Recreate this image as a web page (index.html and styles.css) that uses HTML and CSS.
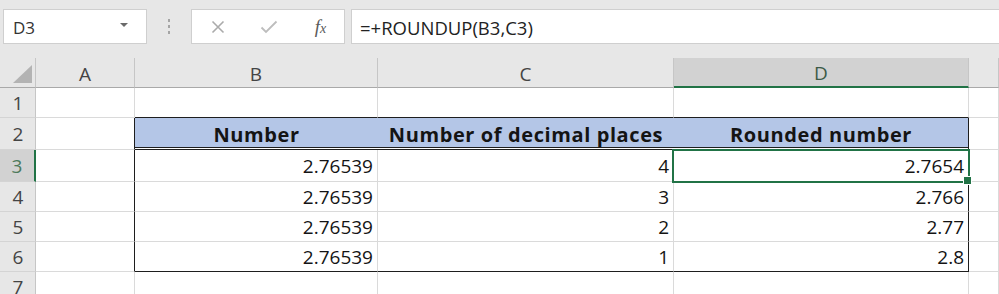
FILE: index.html
```html
<!DOCTYPE html>
<html>
<head>
<meta charset="utf-8">
<link rel="stylesheet" href="styles.css">
</head>
<body>
<div class="app">
  <div class="fbar">
    <div class="namebox">
      <span class="nb-text">D3</span>
      <svg class="nb-arrow" width="10" height="6" viewBox="0 0 10 6"><path d="M1 1 L9 1 L5 5 Z" fill="#6a6a6a"/></svg>
    </div>
    <div class="sep"><i></i><i></i><i></i></div>
    <div class="btns">
      <span class="btn"><svg width="16" height="14" viewBox="0 0 16 14"><path d="M2.5 1.5 L13.5 12.5 M13.5 1.5 L2.5 12.5" stroke="#ababab" stroke-width="1.6" fill="none"/></svg></span>
      <span class="btn"><svg width="18" height="14" viewBox="0 0 18 14"><path d="M1.5 7.5 L6 12 L16.5 1.5" stroke="#bdbdbd" stroke-width="1.8" fill="none"/></svg></span>
      <span class="btn fx"><span class="fx-f">f</span><span class="fx-x">x</span></span>
    </div>
    <div class="formula">=+ROUNDUP(B3,C3)</div>
  </div>
  <div class="sheet">
    <div class="corner"><svg width="36" height="30" viewBox="0 0 36 30"><path d="M32 7 L32 25 L13 25 Z" fill="#b3b3b3"/></svg></div>
    <div class="ch">A</div>
    <div class="ch">B</div>
    <div class="ch">C</div>
    <div class="ch sel">D</div>
    <div class="ch"></div>

    <div class="rh">1</div>
    <div class="c"></div>
    <div class="c tt"></div>
    <div class="c tt"></div>
    <div class="c tt"></div>
    <div class="c"></div>

    <div class="rh">2</div>
    <div class="c tl"></div>
    <div class="c th nr">Number</div>
    <div class="c th nr">Number of decimal places</div>
    <div class="c th tr">Rounded number</div>
    <div class="c"></div>

    <div class="rh sel">3</div>
    <div class="c tl"></div>
    <div class="c num">2.76539</div>
    <div class="c num">4</div>
    <div class="c num tr active">2.7654</div>
    <div class="c"></div>

    <div class="rh">4</div>
    <div class="c tl"></div>
    <div class="c num">2.76539</div>
    <div class="c num">3</div>
    <div class="c num tr">2.766</div>
    <div class="c"></div>

    <div class="rh">5</div>
    <div class="c tl"></div>
    <div class="c num">2.76539</div>
    <div class="c num">2</div>
    <div class="c num tr">2.77</div>
    <div class="c"></div>

    <div class="rh">6</div>
    <div class="c tl"></div>
    <div class="c num tb">2.76539</div>
    <div class="c num tb">1</div>
    <div class="c num tr tb">2.8</div>
    <div class="c"></div>

    <div class="rh">7</div>
    <div class="c"></div>
    <div class="c"></div>
    <div class="c"></div>
    <div class="c"></div>
    <div class="c"></div>
  </div>
</div>
</body>
</html>
```

FILE: styles.css
```css
* { box-sizing: border-box; }
html, body { margin: 0; padding: 0; }
body {
  width: 999px;
  height: 294px;
  overflow: hidden;
  background: #ffffff;
  font-family: "Open Sans", "Noto Sans", sans-serif;
}
.app { width: 999px; }

/* formula bar */
.fbar {
  height: 58px;
  background: #e7e7e7;
  display: flex;
  align-items: flex-start;
  padding: 9px 0 0 3px;
}
.namebox {
  width: 144px;
  height: 35px;
  background: #fff;
  border: 1px solid #cfcfcf;
  display: flex;
  align-items: center;
  justify-content: space-between;
  padding: 0 17px 0 9px;
}
.nb-text { font-size: 17px; color: #333; line-height: 1; padding-top: 1px; }
.nb-arrow { display: block; margin-top: -3px; }
.sep {
  width: 44px;
  height: 35px;
  display: flex;
  flex-direction: column;
  align-items: center;
  justify-content: center;
  gap: 3px;
}
.sep i { display: block; width: 2px; height: 3px; background: #a5a5a5; }
.btns {
  width: 154px;
  height: 35px;
  background: #fff;
  border: 1px solid #cfcfcf;
  display: grid;
  grid-template-columns: 51px 51px 51px;
  align-items: center;
  justify-items: center;
}
.btn { display: flex; align-items: center; justify-content: center; }
.fx {
  font-family: "Liberation Serif", "DejaVu Serif", serif;
  font-style: italic;
  color: #5a5a5a;
  line-height: 1;
  align-items: baseline;
  padding-left: 2px;
}
.fx-f { font-size: 19px; }
.fx-x { font-size: 14px; margin-left: 0px; }
.formula {
  flex: 1;
  height: 35px;
  margin-left: 6px;
  margin-right: -2px;
  background: #fff;
  border: 1px solid #cfcfcf;
  font-size: 18.5px;
  color: #222;
  display: flex;
  align-items: center;
  padding-left: 8px;
  padding-top: 1px;
}

/* sheet */
.sheet {
  display: grid;
  grid-template-columns: 36px 99px 243px 296px 295px 30px;
  grid-template-rows: 30px 30px 32px 32px 30px 30px 30px 30px;
  background: #fff;
}
.corner {
  background: #e7e7e7;
  border-right: 1px solid #c6c6c6;
  border-bottom: 1px solid #a9a9a9;
}
.corner svg { display: block; }
.ch {
  background: #e7e7e7;
  border-right: 1px solid #c6c6c6;
  border-bottom: 1px solid #a9a9a9;
  display: flex;
  align-items: center;
  justify-content: center;
  font-size: 19px;
  color: #444;
  padding-top: 2px;
}
.ch.sel {
  background: #d2d2d2;
  border-bottom: 2px solid #217346;
  color: #3b5a47;
}
.rh {
  background: #e7e7e7;
  border-right: 1px solid #c6c6c6;
  border-bottom: 1px solid #d4d4d4;
  display: flex;
  align-items: center;
  justify-content: center;
  font-size: 19px;
  color: #444;
  padding-left: 1px;
}
.rh.sel {
  background: #d2d2d2;
  border-right: 2px solid #217346;
  color: #4d7a5c;
  padding-left: 0;
}
.c {
  border-right: 1px solid #dadada;
  border-bottom: 1px solid #dadada;
  font-size: 19px;
  color: #141414;
  display: flex;
  align-items: center;
  white-space: nowrap;
}
.num { justify-content: flex-end; padding-right: 4px; }
.tt { border-bottom-color: #1e1e1e; }
.tl { border-right-color: #1e1e1e; }
.tr { border-right-color: #1e1e1e; }
.tb { border-bottom-color: #1e1e1e; }
.th {
  background: #b4c6e7;
  background-clip: padding-box;
  border-bottom: 3px double #1e1e1e;
  font-weight: 700;
  font-size: 20px;
  letter-spacing: 0.6px;
  justify-content: center;
  padding-top: 3px;
  color: #141414;
}
.th.nr { border-right-width: 0; }
.active { position: relative; }
.active::after {
  content: "";
  position: absolute;
  left: -2px;
  top: -1px;
  right: -2px;
  bottom: -2px;
  border: 2px solid #217346;
}
.active::before {
  content: "";
  position: absolute;
  right: -4px;
  bottom: -4px;
  width: 7px;
  height: 7px;
  background: #217346;
  border: 1px solid #fff;
  z-index: 2;
}
```
